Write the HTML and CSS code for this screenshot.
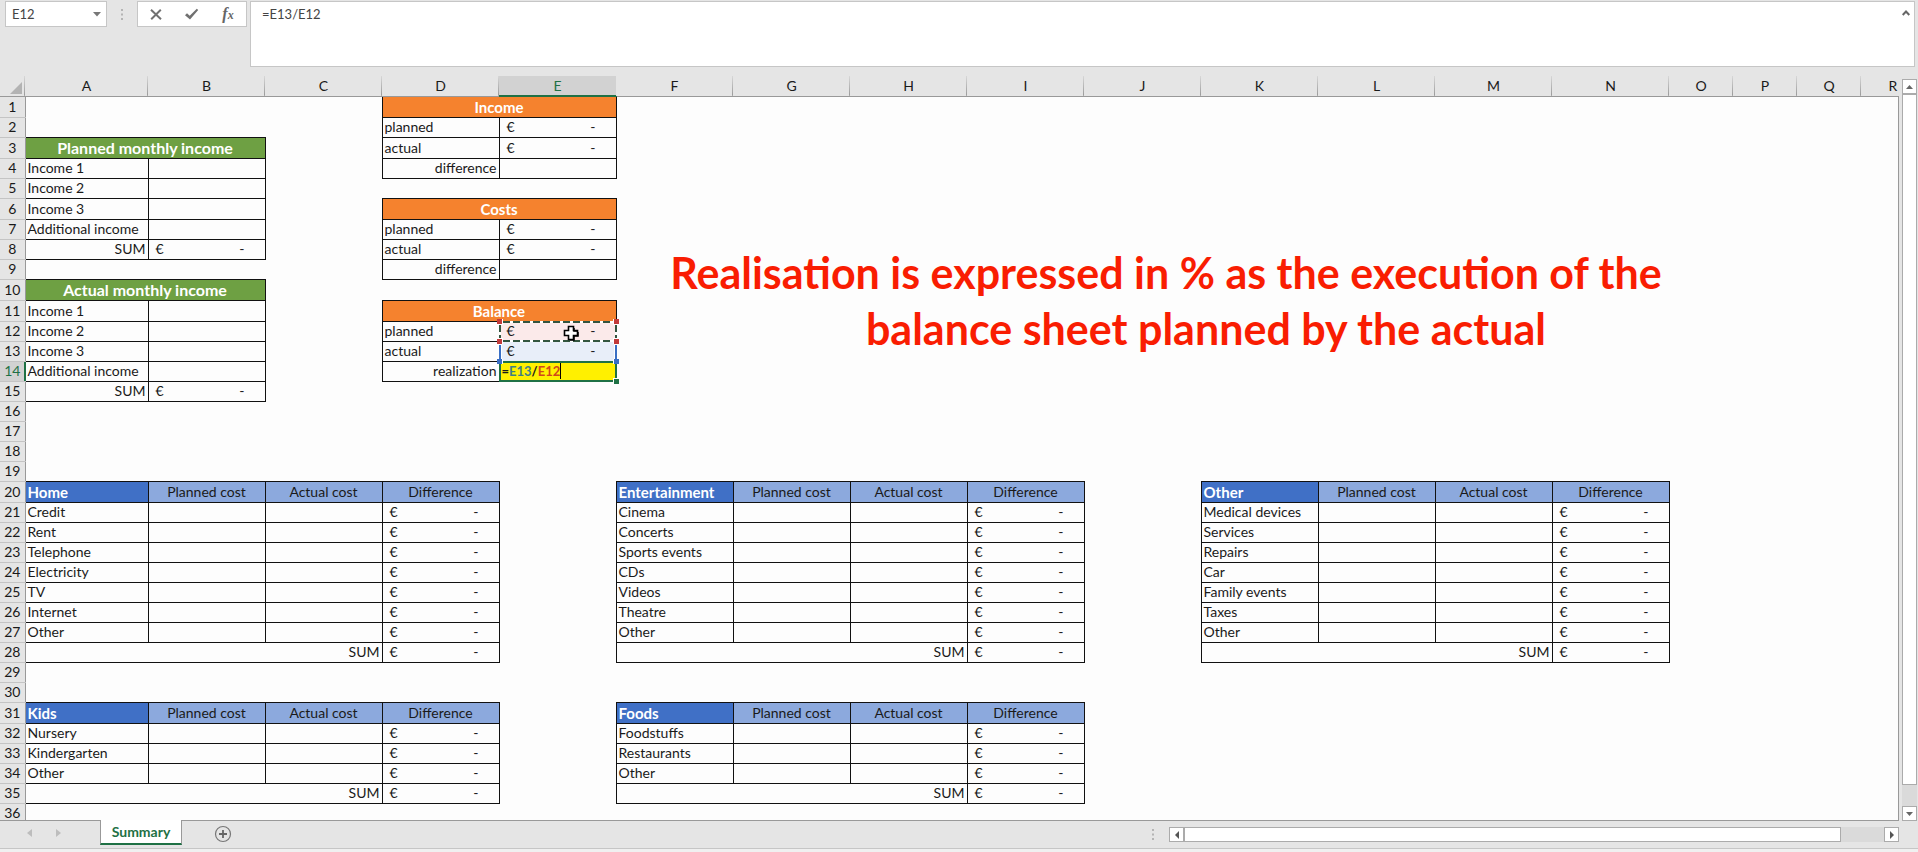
FILE: index.html
```html
<!DOCTYPE html>
<html lang="en">
<head>
<meta charset="utf-8">
<title>Summary</title>
<link rel="stylesheet" href="styles.css">
</head>
<body>
<div class="app">
  <header class="formula-bar">
    <div class="name-box">
      <input class="name-input" type="text" value="E12" aria-label="Name box">
      <button class="icon-btn" type="button" aria-label="Choose a name"><svg width="8" height="5" viewBox="0 0 8 5"><path d="M0 0h8L4 4.500z" fill="#777"/></svg></button>
    </div>
    <svg class="grip" width="2" height="11" viewBox="0 0 2 11"><path d="M0 0h2v2H0zM0 4.500h2v2H0zM0 9h2v2H0z" fill="#b4b4b4"/></svg>
    <div class="formula-tools">
      <button class="icon-btn" type="button" aria-label="Cancel"><svg width="12" height="11" viewBox="0 0 12 11"><path d="M1 .8 11 10.200M10.800.8 1.200 10.200" stroke="#707070" stroke-width="2" fill="none"/></svg></button>
      <button class="icon-btn" type="button" aria-label="Enter"><svg width="14" height="12" viewBox="0 0 14 12"><path d="M0 7.200 2 5.300 4.700 7.800 11.800.8 13.200 2.100 5 11.500z" fill="#707070"/></svg></button>
      <button class="icon-btn fx" type="button" aria-label="Insert function"><i>f</i><i class="fx-x">x</i></button>
    </div>
    <div class="formula-box">
      <textarea class="formula-input" aria-label="Formula">=E13/E12</textarea>
      <button class="icon-btn collapse" type="button" aria-label="Collapse formula bar"><svg width="8" height="6" viewBox="0 0 8 6"><path d="M.7 5 4 1.500 7.300 5" stroke="#666" stroke-width="2" fill="none"/></svg></button>
    </div>
  </header>

  <main class="workspace">
    <div class="sheet">
      <table class="grid">
        <colgroup>
          <col class="col-head"><col class="col-a"><col span="13" class="col-std"><col span="4" class="col-small">
        </colgroup>
        <thead>
          <tr><th class="corner"><svg width="12" height="12" viewBox="0 0 12 12"><path d="M12 0v12H0z" fill="#b3b3b3"/></svg></th><th>A</th><th>B</th><th>C</th><th>D</th><th class="active-col">E</th><th>F</th><th>G</th><th>H</th><th>I</th><th>J</th><th>K</th><th>L</th><th>M</th><th>N</th><th>O</th><th>P</th><th>Q</th><th>R</th></tr>
        </thead>
        <tbody>
          <tr class="tall"><th>1</th><td colspan="3"></td><td class="c orange" colspan="2">Income</td><td colspan="13"></td></tr>
          <tr><th>2</th><td colspan="3"></td><td class="c">planned</td><td class="c"><div class="money"><span>€</span><span>-</span></div></td><td colspan="13"></td></tr>
          <tr class="tall"><th>3</th><td class="c green" colspan="2">Planned monthly income</td><td></td><td class="c">actual</td><td class="c"><div class="money"><span>€</span><span>-</span></div></td><td colspan="13"></td></tr>
          <tr><th>4</th><td class="c">Income 1</td><td class="c"></td><td></td><td class="c right">difference</td><td class="c"></td><td colspan="13"></td></tr>
          <tr><th>5</th><td class="c">Income 2</td><td class="c"></td><td colspan="16"></td></tr>
          <tr class="tall"><th>6</th><td class="c">Income 3</td><td class="c"></td><td></td><td class="c orange" colspan="2">Costs</td><td colspan="13"></td></tr>
          <tr><th>7</th><td class="c">Additional income</td><td class="c"></td><td></td><td class="c">planned</td><td class="c"><div class="money"><span>€</span><span>-</span></div></td><td colspan="13"></td></tr>
          <tr><th>8</th><td class="c right">SUM</td><td class="c"><div class="money"><span>€</span><span>-</span></div></td><td></td><td class="c">actual</td><td class="c"><div class="money"><span>€</span><span>-</span></div></td><td colspan="13"></td></tr>
          <tr><th>9</th><td colspan="3"></td><td class="c right">difference</td><td class="c"></td><td colspan="13"></td></tr>
          <tr class="tall"><th>10</th><td class="c green" colspan="2">Actual monthly income</td><td colspan="16"></td></tr>
          <tr class="tall"><th>11</th><td class="c">Income 1</td><td class="c"></td><td></td><td class="c orange" colspan="2">Balance</td><td colspan="13"></td></tr>
          <tr><th>12</th><td class="c">Income 2</td><td class="c"></td><td></td><td class="c">planned</td><td class="c ref-red"><div class="money"><span>€</span><span>-</span></div><svg class="ants" width="122" height="25" viewBox="0 0 122 25"><path d="M3 3h116M3 22h116M3 3v19M119 3v19" stroke="#fff" stroke-width="2"/><path d="M3 3h116M3 22h116M3 3v19M119 3v19" stroke="#33553f" stroke-width="2" stroke-dasharray="7 3" stroke-dashoffset="-3"/><path d="M0 0h6v6H0zM116 0h6v6h-6zM0 19h6v6H0zM116 19h6v6h-6z" fill="#fff"/><path d="M0 0h5v5H0zM117 0h5v5h-5zM0 20h5v5H0zM117 20h5v5h-5z" fill="#c23b3b"/></svg><svg class="cursor" width="16" height="16" viewBox="0 0 16 16"><path d="M5.500 1.500h5v4h4v5h-4v4h-5v-4h-4v-5h4z" fill="#fff" stroke="#000" stroke-width="1.600"/><path d="M11 3v3h4M15 7v4h-4v4H7" fill="none" stroke="#000" stroke-width="1.500"/></svg></td><td colspan="13"></td></tr>
          <tr><th>13</th><td class="c">Income 3</td><td class="c"></td><td></td><td class="c">actual</td><td class="c ref-blue"><div class="money"><span>€</span><span>-</span></div><svg class="sides" width="122" height="25" viewBox="0 0 122 25"><path d="M3 5v15M119 5v15" stroke="#fff" stroke-width="4"/><path d="M3 6v14M119 6v14" stroke="#3a6fc4" stroke-width="2"/></svg></td><td colspan="13"></td></tr>
          <tr><th class="active-row">14</th><td class="c">Additional income</td><td class="c"></td><td></td><td class="c right">realization</td><td class="c editing"><span class="edit-text">=<span class="blue">E13</span>/<span class="red">E12</span></span><svg class="frame" width="122" height="25" viewBox="0 0 122 25"><path d="M3 3h116v19H3z" fill="none" stroke="#1f7145" stroke-width="2"/><path d="M0 0h6v5H0zM116 0h6v5h-6zM116 19h6v6h-6z" fill="#fff"/><path d="M0 0h5v5H0zM117 0h5v5h-5z" fill="#3a6fc4"/><path d="M117 20h5v5h-5z" fill="#1f7145"/></svg></td><td colspan="13"></td></tr>
          <tr><th>15</th><td class="c right">SUM</td><td class="c"><div class="money"><span>€</span><span>-</span></div></td><td colspan="16"></td></tr>
          <tr><th>16</th><td colspan="18"></td></tr>
          <tr><th>17</th><td colspan="18"></td></tr>
          <tr><th>18</th><td colspan="18"></td></tr>
          <tr><th>19</th><td colspan="18"></td></tr>
          <tr class="tall"><th>20</th><td class="c title">Home</td><td class="c label">Planned cost</td><td class="c label">Actual cost</td><td class="c label">Difference</td><td></td><td class="c title">Entertainment</td><td class="c label">Planned cost</td><td class="c label">Actual cost</td><td class="c label">Difference</td><td></td><td class="c title">Other</td><td class="c label">Planned cost</td><td class="c label">Actual cost</td><td class="c label">Difference</td><td colspan="4"></td></tr>
          <tr><th>21</th><td class="c">Credit</td><td class="c"></td><td class="c"></td><td class="c"><div class="money"><span>€</span><span>-</span></div></td><td></td><td class="c">Cinema</td><td class="c"></td><td class="c"></td><td class="c"><div class="money"><span>€</span><span>-</span></div></td><td></td><td class="c">Medical devices</td><td class="c"></td><td class="c"></td><td class="c"><div class="money"><span>€</span><span>-</span></div></td><td colspan="4"></td></tr>
          <tr><th>22</th><td class="c">Rent</td><td class="c"></td><td class="c"></td><td class="c"><div class="money"><span>€</span><span>-</span></div></td><td></td><td class="c">Concerts</td><td class="c"></td><td class="c"></td><td class="c"><div class="money"><span>€</span><span>-</span></div></td><td></td><td class="c">Services</td><td class="c"></td><td class="c"></td><td class="c"><div class="money"><span>€</span><span>-</span></div></td><td colspan="4"></td></tr>
          <tr><th>23</th><td class="c">Telephone</td><td class="c"></td><td class="c"></td><td class="c"><div class="money"><span>€</span><span>-</span></div></td><td></td><td class="c">Sports events</td><td class="c"></td><td class="c"></td><td class="c"><div class="money"><span>€</span><span>-</span></div></td><td></td><td class="c">Repairs</td><td class="c"></td><td class="c"></td><td class="c"><div class="money"><span>€</span><span>-</span></div></td><td colspan="4"></td></tr>
          <tr><th>24</th><td class="c">Electricity</td><td class="c"></td><td class="c"></td><td class="c"><div class="money"><span>€</span><span>-</span></div></td><td></td><td class="c">CDs</td><td class="c"></td><td class="c"></td><td class="c"><div class="money"><span>€</span><span>-</span></div></td><td></td><td class="c">Car</td><td class="c"></td><td class="c"></td><td class="c"><div class="money"><span>€</span><span>-</span></div></td><td colspan="4"></td></tr>
          <tr><th>25</th><td class="c">TV</td><td class="c"></td><td class="c"></td><td class="c"><div class="money"><span>€</span><span>-</span></div></td><td></td><td class="c">Videos</td><td class="c"></td><td class="c"></td><td class="c"><div class="money"><span>€</span><span>-</span></div></td><td></td><td class="c">Family events</td><td class="c"></td><td class="c"></td><td class="c"><div class="money"><span>€</span><span>-</span></div></td><td colspan="4"></td></tr>
          <tr><th>26</th><td class="c">Internet</td><td class="c"></td><td class="c"></td><td class="c"><div class="money"><span>€</span><span>-</span></div></td><td></td><td class="c">Theatre</td><td class="c"></td><td class="c"></td><td class="c"><div class="money"><span>€</span><span>-</span></div></td><td></td><td class="c">Taxes</td><td class="c"></td><td class="c"></td><td class="c"><div class="money"><span>€</span><span>-</span></div></td><td colspan="4"></td></tr>
          <tr><th>27</th><td class="c">Other</td><td class="c"></td><td class="c"></td><td class="c"><div class="money"><span>€</span><span>-</span></div></td><td></td><td class="c">Other</td><td class="c"></td><td class="c"></td><td class="c"><div class="money"><span>€</span><span>-</span></div></td><td></td><td class="c">Other</td><td class="c"></td><td class="c"></td><td class="c"><div class="money"><span>€</span><span>-</span></div></td><td colspan="4"></td></tr>
          <tr><th>28</th><td class="c right" colspan="3">SUM</td><td class="c"><div class="money"><span>€</span><span>-</span></div></td><td></td><td class="c right" colspan="3">SUM</td><td class="c"><div class="money"><span>€</span><span>-</span></div></td><td></td><td class="c right" colspan="3">SUM</td><td class="c"><div class="money"><span>€</span><span>-</span></div></td><td colspan="4"></td></tr>
          <tr><th>29</th><td colspan="18"></td></tr>
          <tr><th>30</th><td colspan="18"></td></tr>
          <tr class="tall"><th>31</th><td class="c title">Kids</td><td class="c label">Planned cost</td><td class="c label">Actual cost</td><td class="c label">Difference</td><td></td><td class="c title">Foods</td><td class="c label">Planned cost</td><td class="c label">Actual cost</td><td class="c label">Difference</td><td colspan="9"></td></tr>
          <tr><th>32</th><td class="c">Nursery</td><td class="c"></td><td class="c"></td><td class="c"><div class="money"><span>€</span><span>-</span></div></td><td></td><td class="c">Foodstuffs</td><td class="c"></td><td class="c"></td><td class="c"><div class="money"><span>€</span><span>-</span></div></td><td colspan="9"></td></tr>
          <tr><th>33</th><td class="c">Kindergarten</td><td class="c"></td><td class="c"></td><td class="c"><div class="money"><span>€</span><span>-</span></div></td><td></td><td class="c">Restaurants</td><td class="c"></td><td class="c"></td><td class="c"><div class="money"><span>€</span><span>-</span></div></td><td colspan="9"></td></tr>
          <tr><th>34</th><td class="c">Other</td><td class="c"></td><td class="c"></td><td class="c"><div class="money"><span>€</span><span>-</span></div></td><td></td><td class="c">Other</td><td class="c"></td><td class="c"></td><td class="c"><div class="money"><span>€</span><span>-</span></div></td><td colspan="9"></td></tr>
          <tr><th>35</th><td class="c right" colspan="3">SUM</td><td class="c"><div class="money"><span>€</span><span>-</span></div></td><td></td><td class="c right" colspan="3">SUM</td><td class="c"><div class="money"><span>€</span><span>-</span></div></td><td colspan="9"></td></tr>
          <tr><th>36</th><td colspan="18"></td></tr>
        </tbody>
      </table>
      <p class="callout">Realisation is expressed in % as the execution of the<br><span class="callout-end">balance sheet planned by the actual</span></p>
    </div>
    <div class="vscroll">
      <button class="scroll-btn" type="button" aria-label="Scroll up"><svg width="7" height="4" viewBox="0 0 7 4"><path d="M3.500 0 7 4H0z" fill="#666"/></svg></button>
      <div class="vthumb"></div>
      <div class="vtrack"></div>
      <button class="scroll-btn" type="button" aria-label="Scroll down"><svg width="7" height="4" viewBox="0 0 7 4"><path d="M0 0h7L3.500 4z" fill="#666"/></svg></button>
    </div>
  </main>

  <footer class="tabs">
    <div class="tab-nav">
      <button class="icon-btn" type="button" aria-label="Previous sheet"><svg width="5" height="8" viewBox="0 0 5 8"><path d="M5 0v8L0 4z" fill="#bdbdbd"/></svg></button>
      <button class="icon-btn" type="button" aria-label="Next sheet"><svg width="5" height="8" viewBox="0 0 5 8"><path d="M0 0v8l5-4z" fill="#bdbdbd"/></svg></button>
    </div>
    <button class="tab" type="button">Summary</button>
    <button class="icon-btn add" type="button" aria-label="New sheet"><svg width="18" height="18" viewBox="0 0 18 18"><circle cx="9" cy="9" r="7.500" fill="none" stroke="#777" stroke-width="1.200"/><path d="M9 5v8M5 9h8" stroke="#666" stroke-width="1.800"/></svg></button>
    <svg class="tab-grip" width="2" height="11" viewBox="0 0 2 11"><path d="M0 0h2v2H0zM0 4.500h2v2H0zM0 9h2v2H0z" fill="#b4b4b4"/></svg>
    <div class="hscroll">
      <button class="scroll-btn" type="button" aria-label="Scroll left"><svg width="4" height="8" viewBox="0 0 4 8"><path d="M4 0v8L0 4z" fill="#555"/></svg></button>
      <div class="hthumb"></div>
      <div class="htrack"></div>
      <button class="scroll-btn" type="button" aria-label="Scroll right"><svg width="4" height="8" viewBox="0 0 4 8"><path d="M0 0v8l4-4z" fill="#555"/></svg></button>
    </div>
  </footer>
  <div class="status"></div>
</div>
</body>
</html>
```
FILE: styles.css
```css
* { box-sizing: border-box; }
body {
  margin: 0;
  font-family: Lato, "Liberation Sans", sans-serif;
  font-size: 14px;
  color: #1a1a1a;
  background: #e5e5e5;
}
.app {
  display: flex;
  flex-direction: column;
  height: 100vh;
  overflow: hidden;
}
button, input, textarea { font: inherit; color: inherit; }
svg { display: block; flex: none; }
.icon-btn {
  display: flex;
  align-items: center;
  justify-content: center;
  padding: 0;
  border: 0;
  background: none;
}

/* Formula bar */
.formula-bar {
  display: flex;
  align-items: flex-start;
  padding: 1px 3px 9px 5px;
  flex: none;
}
.name-box, .formula-tools, .formula-box {
  display: flex;
  background: #fff;
  border: 1px solid #c6c6c6;
}
.name-box { width: 102px; height: 26px; padding-right: 5px; }
.name-input {
  flex: 1;
  min-width: 0;
  padding: 0 6px;
  border: 0;
  background: none;
  font-size: 13px;
  color: #444;
}
.grip { margin: 8px 14px 0; }
.formula-tools { width: 110px; height: 26px; margin-right: 3px; }
.formula-tools .icon-btn { flex: 1; }
.formula-tools .fx { font: italic bold 16px "Liberation Serif", serif; color: #666; }
.fx-x { font-size: 12px; padding-top: 3px; }
.formula-box { flex: 1; height: 66px; padding-right: 4px; align-items: flex-start; }
.formula-input {
  flex: 1;
  align-self: stretch;
  padding: 3px 11px;
  border: 0;
  resize: none;
  background: none;
  font-size: 13px;
  line-height: 18px;
  color: #444;
}
.collapse { height: 22px; }

/* Sheet */
.workspace { display: flex; flex: 1; min-height: 0; }
.sheet {
  position: relative;
  flex: 1;
  min-width: 0;
  overflow: hidden;
  background: linear-gradient(#e5e5e5 20px, #fdfdfd 20px);
  border-bottom: 1px solid #999;
}
.sheet::after {
  content: "";
  position: absolute;
  top: 20px;
  right: 0;
  bottom: 0;
  border-right: 1px solid #999;
}
.grid {
  table-layout: fixed;
  width: 100%;
  border-collapse: collapse;
}
.col-head { width: 25px; }
.col-a { width: 123px; }
.col-std { width: 117px; }
.col-small { width: 64px; }
.grid tr { height: 20px; }
.grid tr.tall { height: 21px; }
.grid th, .grid td {
  padding: 0 2px;
  line-height: 18px;
  white-space: nowrap;
}
.grid th { font-weight: 400; background: #e5e5e5; }
thead th {
  border-bottom: 1px solid #999;
}
.grid thead th {
  background: linear-gradient(#d8d8d8, #999) right / 1px 100% no-repeat #e5e5e5;
}
.grid .corner { padding: 0 3px 2px 0; vertical-align: bottom; }
.corner svg { margin-left: auto; }
.grid thead .active-col {
  background: #d2d2d2;
  color: #1f7145;
  border-bottom-color: #1f7145;
  box-shadow: inset 0 -1px #1f7145;
}
tbody th { border-right: 1px solid #999; border-bottom: 1px solid #c4c4c4; }
.grid .active-row {
  background: #d2d2d2;
  color: #1f7145;
  border-right-color: #1f7145;
  box-shadow: inset -1px 0 #1f7145;
}
.c { border: 1px solid #111; }
.right { text-align: right; }
.green, .orange, .title { font-size: 15px; font-weight: 700; color: #fff; }
.green { font-size: 16px; }
.green, .orange, .label { text-align: center; }
.green { background: #6ea043; }
.orange { background: #f5822e; }
.title { background: #4070c6; }
.label { background: #8ca9dd; }
.money {
  display: flex;
  justify-content: space-between;
  padding: 0 18px 0 5px;
}
.ref-red { position: relative; background: #fbeaea; }
.ref-blue { position: relative; background: #e8eef9; }
.editing { position: relative; background: #fff000; font-size: 13px; font-weight: 700; }
.edit-text { border-right: 1px solid #000; }
.blue { color: #3f7f86; }
.red { color: #d0481c; }
.ants, .frame, .sides { position: absolute; top: -3px; left: -3px; z-index: 1; }
.cursor { position: absolute; top: 3px; left: 63px; z-index: 1; }
.callout {
  position: absolute;
  top: 169px;
  left: 666px;
  width: 1000px;
  margin: 0;
  font-size: 43px;
  font-weight: 700;
  line-height: 56px;
  text-align: center;
  white-space: nowrap;
  color: #f91d02;
}
.callout-end { padding-left: 80px; }

/* Scroll bars */
.scroll-btn {
  display: flex;
  align-items: center;
  justify-content: center;
  flex: none;
  width: 15px;
  height: 15px;
  padding: 0;
  border: 1px solid #ababab;
  background: #fff;
}
.vscroll {
  display: flex;
  flex-direction: column;
  flex: none;
  width: 19px;
  padding: 3px 1px 0 3px;
}
.vthumb { flex: 692; background: #fff; border: 1px solid #ababab; }
.vtrack { flex: 21; background: #dadada; }

/* Sheet tabs */
.tabs {
  display: flex;
  align-items: flex-start;
  flex: none;
  height: 27px;
  padding-right: 19px;
}
.tab-nav { display: flex; gap: 24px; width: 100px; padding: 8px 0 0 27px; }
.tab {
  width: 82px;
  height: 25px;
  margin-top: -1px;
  padding: 0;
  border: solid #999;
  border-width: 0 1px;
  border-bottom: 2px solid #1f7145;
  background: #fff;
  font-weight: 700;
  color: #1f7145;
  position: relative;
}
.add { margin: 4px 0 0 32px; }
.tab-grip { margin: 8px 15px 0 auto; }
.hscroll { display: flex; width: 730px; margin-top: 6px; }
.hthumb { flex: 657; background: #fff; border: 1px solid #ababab; }
.htrack { flex: 43; background: #dadada; }
.status { flex: none; height: 4px; background: #f0f0f0; border-top: 1px solid #c6c6c6; }
```
